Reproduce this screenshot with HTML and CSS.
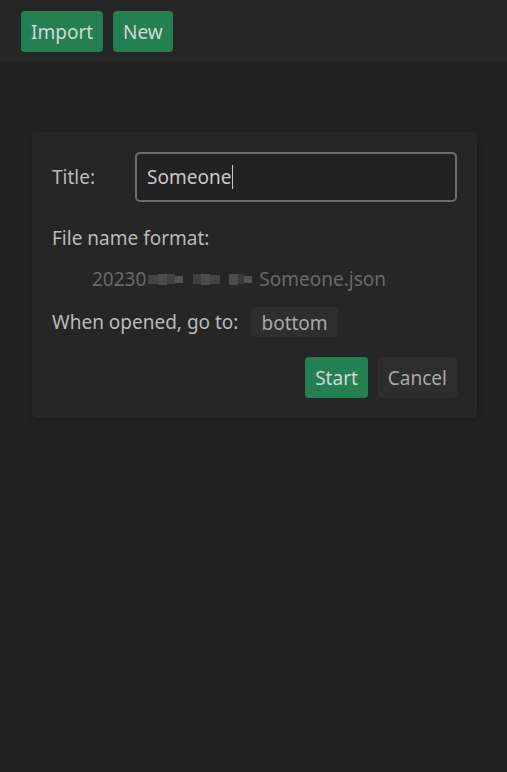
FILE: index.html
```html
<!DOCTYPE html>
<html>
<head>
<meta charset="utf-8">
<link rel="stylesheet" href="styles.css">
</head>
<body>
<header class="topbar">
  <button class="btn btn-green">Import</button>
  <button class="btn btn-green">New</button>
</header>
<main class="main">
  <section class="card">
    <div class="row-title">
      <span class="label">Title:</span>
      <div class="input"><span>Someone</span><span class="caret"></span></div>
    </div>
    <div class="label row-format">File name format:</div>
    <div class="filename">
      <span>20230</span><span class="redact g1"><i class="b1"></i><i class="b2"></i><i class="b3"></i><i class="b4"></i></span><span class="redact g2"><i class="b3"></i><i class="b2"></i><i class="b1"></i></span><span class="redact g3"><i class="b2"></i><i class="b5"></i><i class="b4"></i></span><span>Someone.json</span>
    </div>
    <div class="row-go">
      <span class="label">When opened, go to:</span>
      <button class="btn btn-gray small">bottom</button>
    </div>
    <div class="actions">
      <button class="btn btn-green">Start</button>
      <button class="btn btn-gray">Cancel</button>
    </div>
  </section>
</main>
</body>
</html>
```

FILE: styles.css
```css
* { box-sizing: border-box; }
html, body { height: 100%; }
body {
  margin: 0;
  background: #222222;
  font-family: "Noto Sans", "Open Sans", sans-serif;
  font-size: 19px;
  color: #bcbcbc;
}
.topbar {
  height: 62px;
  background: #262626;
  display: flex;
  align-items: flex-start;
  gap: 10px;
  padding: 11px 21px 0;
}
.btn {
  font-family: inherit;
  font-size: 19px;
  border: none;
  border-radius: 4px;
  height: 41px;
  padding: 2px 10px 0;
  line-height: 39px;
  cursor: pointer;
}
.btn-green { background: #248052; color: #cfd8d3; }
.btn-gray { background: #2e2e2e; color: #a8a8a8; }
.btn.small { height: 30px; line-height: 28px; padding: 2px 10px 0; }
.main { padding: 70px 30px 0 32px; }
.card {
  width: 445px;
  height: 286px;
  background: #262626;
  border-radius: 4px;
  padding: 20px;
  box-shadow: 0 2px 6px rgba(0,0,0,0.25);
}
.row-title { display: flex; align-items: center; }
.label { color: #bababa; }
.row-title .label { width: 83px; }
.input {
  width: 322px;
  height: 50px;
  border: 2px solid #6c6c6c;
  border-radius: 5px;
  background: #222;
  display: flex;
  align-items: center;
  padding: 0 10px;
  color: #c8c8c8;
}
.caret { width: 1px; height: 24px; background: #c8c8c8; margin-left: 1px; }
.row-format { margin-top: 24px; line-height: 24px; }
.filename {
  margin-top: 17px;
  padding-left: 40px;
  color: #696969;
  display: flex;
  align-items: center;
  line-height: 24px;
}
.redact { display: inline-flex; align-items: center; }
.redact i { display: inline-block; height: 8px; }
.redact .b1 { width: 10px; background: #444; height: 9px; }
.redact .b2 { width: 9px; background: #4c4c4c; height: 11px; }
.redact .b3 { width: 8px; background: #404040; height: 10px; }
.redact .b4 { width: 8px; background: #525252; height: 7px; }
.redact .b5 { width: 6px; background: #3a3a3a; height: 10px; }
.g1 { margin-left: 2px; }
.g2 { margin-left: 10px; }
.g3 { margin-left: 9px; margin-right: 7px; }
.row-go { margin-top: 16px; display: flex; align-items: center; gap: 13px; }
.actions { margin-top: 20px; display: flex; justify-content: flex-end; gap: 10px; }
```
